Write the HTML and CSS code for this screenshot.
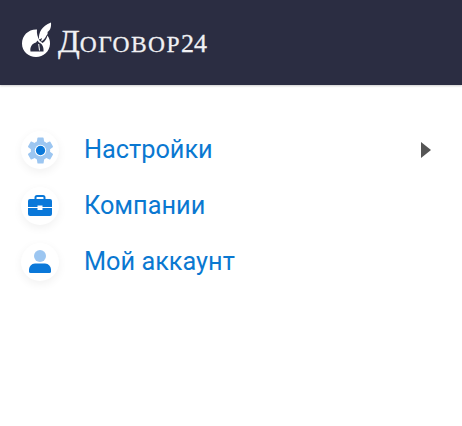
FILE: index.html
```html
<!DOCTYPE html>
<html lang="ru">
  <head>
    <meta charset="UTF-8" />
    <meta name="viewport" content="width=device-width, initial-scale=1.0" />
    <title>Договор24</title>
    <link rel="stylesheet" href="styles.css">
  </head>
  <body>
    <header class="topbar">
      <svg class="logo-mark" viewBox="0 0 32 36" width="32" height="36">
        <path fill="#fff" d="M16 7.500C7.500 7 1 13.500 1 21.500C1 29.500 7.500 35 15 35C22.500 35 28.500 29.500 29 22C29.200 18.500 28 15.500 26.500 13.500C25.500 17 24 19.500 21.500 21L18.500 18.500C16.500 15 15.500 11 16 7.500Z" />
        <path fill="#fff" d="M18 17C17.500 11 20.500 4 30 0.500C30.500 6 28.500 9 26.500 10C27 11 26.500 12.500 25.500 13.500C24.500 16 22.500 18.500 20 19.500L21 16C19.800 17 19 17.500 18 17Z" />
        <path fill="#2b2d42" d="M9.500 29.500C8.800 25 11 21.500 15 20.500L16.500 18.500L18 20.500C21 21.500 23 25 22.500 29.500Z" />
        <path fill="#fff" d="M17.200 22L18.200 22L19 28.500L18 28.500Z" />
      </svg>
      <span class="logo-text"><span class="logo-cap">Д</span><span class="logo-small">оговор</span>24</span>
    </header>

    <nav class="menu">
      <a class="menu-item">
        <span class="menu-icon">
          <svg viewBox="0 0 24 24" width="31" height="31">
            <path fill="#9cc6f1" d="M19.400 13a7.600 7.600 0 0 0 0-2l2.100-1.600a.5.5 0 0 0 .1-.6l-2-3.500a.5.5 0 0 0-.6-.2l-2.500 1a7.500 7.500 0 0 0-1.700-1L14.400 2.400a.5.5 0 0 0-.5-.4h-3.800a.5.5 0 0 0-.5.4l-.4 2.700a7.500 7.500 0 0 0-1.700 1l-2.500-1a.5.5 0 0 0-.6.2l-2 3.500a.5.5 0 0 0 .1.6L4.600 11a7.600 7.600 0 0 0 0 2l-2.100 1.600a.5.5 0 0 0-.1.6l2 3.500a.5.5 0 0 0 .6.2l2.500-1a7.500 7.500 0 0 0 1.700 1l.4 2.700a.5.5 0 0 0 .5.4h3.800a.5.5 0 0 0 .5-.4l.4-2.700a7.500 7.500 0 0 0 1.700-1l2.500 1a.5.5 0 0 0 .6-.2l2-3.500a.5.5 0 0 0-.1-.6Z" />
            <circle cx="12" cy="12" r="4.400" fill="#fff" />
            <circle cx="12" cy="12" r="3.600" fill="#0a78d9" />
          </svg>
        </span>
        <span class="menu-label">Настройки</span>
        <span class="menu-arrow"></span>
      </a>
      <a class="menu-item">
        <span class="menu-icon">
          <svg viewBox="0 0 26 24" width="26" height="24">
            <path fill="none" stroke="#0a78d9" stroke-width="2" d="M8.500 6V3.500A1.500 1.500 0 0 1 10 2h6a1.500 1.500 0 0 1 1.500 1.500V6" />
            <path fill="#0a78d9" d="M3 5h20a2 2 0 0 1 2 2v6H15.500v-1.500h-5V13H1V7a2 2 0 0 1 2-2Z" />
            <path fill="#0a78d9" d="M1 14h9.500v2h5v-2H25v6a2 2 0 0 1-2 2H3a2 2 0 0 1-2-2Z" />
          </svg>
        </span>
        <span class="menu-label">Компании</span>
      </a>
      <a class="menu-item">
        <span class="menu-icon">
          <svg viewBox="0 0 24 26" width="24" height="26">
            <circle cx="12" cy="7" r="6" fill="#9cc6f1" />
            <path fill="#0a78d9" d="M7 14.500h10c3.500 0 6 3 6 6.500v1.500a1.500 1.500 0 0 1-1.500 1.500h-19A1.500 1.500 0 0 1 1 22.500V21c0-3.500 2.500-6.500 6-6.500Z" />
          </svg>
        </span>
        <span class="menu-label">Мой аккаунт</span>
      </a>
    </nav>
  </body>
</html>
```

FILE: styles.css
```css
body {
  margin: 0;
  height: 426px;
  background: #fff;
  font-family: Roboto, "Liberation Sans", sans-serif;
  overflow: hidden;
}

.topbar {
  display: flex;
  align-items: center;
  gap: 5px;
  height: 85px;
  padding: 0 21px;
  background: #2b2d42;
  box-shadow: 0 1px 2px rgba(0, 0, 0, 0.2);
}

.logo-mark {
  flex: none;
  margin-top: -6px;
}

.logo-text {
  margin-top: -3px;
  font-family: "Liberation Serif", serif;
  font-size: 26px;
  color: #f1f1f4;
  -webkit-text-stroke: 0.3px #f1f1f4;
}

.logo-cap {
  font-size: 32px;
}

.logo-small {
  font-size: 23.5px;
  letter-spacing: 1.4px;
  text-transform: uppercase;
}

.menu {
  display: flex;
  flex-direction: column;
  gap: 18px;
  padding: 46px 21px 0;
}

.menu-item {
  display: flex;
  align-items: center;
  height: 38px;
}

.menu-icon {
  flex: none;
  display: flex;
  justify-content: center;
  align-items: center;
  width: 38px;
  height: 38px;
  margin-right: 25px;
  border-radius: 50%;
  background: #fff;
  box-shadow: 0 3px 10px rgba(0, 0, 0, 0.06);
}

.menu-label {
  flex: 1;
  margin-top: -2px;
  font-size: 25.3px;
  color: #0a78d1;
}

.menu-arrow {
  width: 0;
  height: 0;
  margin-right: 10px;
  border-top: 8px solid transparent;
  border-bottom: 8px solid transparent;
  border-left: 10px solid #555;
}
```
